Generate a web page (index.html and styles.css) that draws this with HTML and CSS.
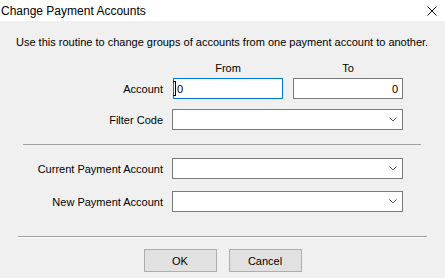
FILE: index.html
```html
<!DOCTYPE html>
<html lang="en">
<head>
  <meta charset="UTF-8" />
  <title>Change Payment Accounts</title>
  <link rel="stylesheet" href="styles.css">
</head>
<body>

  <!-- title bar -->
  <div class="titlebar">
    <span class="title">Change Payment Accounts</span>
    <svg class="close" width="10" height="10" viewBox="0 0 10 10">
      <path d="M0.5 0.5 L9.5 9.5 M9.5 0.5 L0.5 9.5" stroke="#111" stroke-width="1" fill="none"/>
    </svg>
  </div>

  <!-- dialog body -->
  <div class="dialog">
    <p class="intro">Use this routine to change groups of accounts from one payment account to another.</p>

    <div class="range range-first">
      <div class="col-head"></div>
      <div class="col-head">From</div>
      <div class="col-head">To</div>

      <label class="field-label">Account</label>
      <div class="textbox focused">
        <span class="value">0</span>
        <span class="ibeam"></span>
      </div>
      <div class="textbox right"><span class="value">0</span></div>

      <label class="field-label">Filter Code</label>
      <div class="combo wide">
        <svg class="chevron" width="8" height="5" viewBox="0 0 8 5"><path d="M0.5 0.5 L4 4 L7.5 0.5" fill="none" stroke="#606060" stroke-width="1"/></svg>
      </div>
    </div>

    <hr class="sep sep-top">

    <div class="range range-accounts">
      <label class="field-label">Current Payment Account</label>
      <div class="combo wide">
        <svg class="chevron" width="8" height="5" viewBox="0 0 8 5"><path d="M0.5 0.5 L4 4 L7.5 0.5" fill="none" stroke="#606060" stroke-width="1"/></svg>
      </div>

      <label class="field-label">New Payment Account</label>
      <div class="combo wide">
        <svg class="chevron" width="8" height="5" viewBox="0 0 8 5"><path d="M0.5 0.5 L4 4 L7.5 0.5" fill="none" stroke="#606060" stroke-width="1"/></svg>
      </div>
    </div>

    <hr class="sep sep-bottom">

    <div class="buttons">
      <button class="btn">OK</button>
      <button class="btn">Cancel</button>
    </div>
  </div>

</body>
</html>
```

FILE: styles.css
```css
html, body {
  margin: 0;
  padding: 0;
  font-family: 'Liberation Sans', Arial, sans-serif;
  font-size: 11px;
  color: #000;
  overflow: hidden;
}

body {
  width: 445px;
  height: 278px;
  background: #f0f0f0;
}

.titlebar {
  height: 21px;
  background: #fff;
  display: flex;
  justify-content: space-between;
  align-items: center;
}

.title {
  font-size: 12px;
  padding-left: 1px;
}

.close {
  margin-right: 8px;
}

.dialog {
  padding-top: 13px;
}

.intro {
  margin: 0 0 0 16px;
  line-height: 16px;
  white-space: nowrap;
}

.range {
  display: grid;
  grid-template-columns: 163px 110px 110px;
  column-gap: 10px;
  row-gap: 10px;
  align-items: center;
}

.range-first {
  margin-top: 11px;
}

.range-accounts {
  row-gap: 12px;
}

.col-head {
  text-align: center;
  line-height: 14px;
  margin-bottom: -7px;
}

.field-label {
  text-align: right;
  white-space: nowrap;
}

.textbox,
.combo {
  position: relative;
  height: 21px;
  box-sizing: border-box;
  background: #fff;
  border: 1px solid #7a7a7a;
  display: flex;
  align-items: center;
}

.textbox.focused {
  border-color: #0078d7;
}

.textbox.right {
  justify-content: flex-end;
}

.value {
  padding: 0 4px 0 3px;
}

.ibeam {
  position: absolute;
  left: 1px;
  top: 2px;
  width: 1px;
  height: 15px;
  background: #000;
}

.ibeam::before,
.ibeam::after {
  content: "";
  position: absolute;
  left: -2px;
  width: 3px;
  height: 1px;
  background: #000;
}

.ibeam::before { top: 0; }
.ibeam::after { bottom: 0; }

.combo.wide {
  grid-column: 2 / 4;
  justify-content: flex-end;
  margin-left: -1px;
}

.chevron {
  margin-right: 5px;
}

.sep {
  border: 0;
  height: 1px;
  background: #a0a0a0;
  padding: 0;
}

.sep-top {
  margin: 14px 24px 13px 23px;
}

.sep-bottom {
  margin: 24px 18px 0 18px;
  box-shadow: 0 1px 0 #fff;
}

.buttons {
  display: flex;
  justify-content: center;
  gap: 12px;
  margin-top: 12px;
}

.btn {
  width: 73px;
  height: 23px;
  background: #e1e1e1;
  border: 1px solid #adadad;
  font-family: 'Liberation Sans', Arial, sans-serif;
  font-size: 11px;
  color: #000;
  padding: 0;
}
```
